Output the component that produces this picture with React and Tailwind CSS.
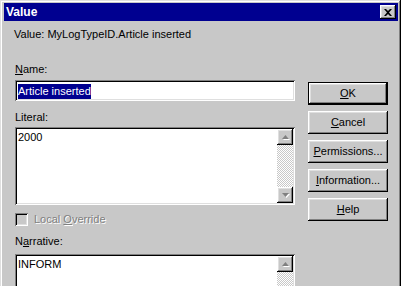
import React from "react";

const sunken =
    "shadow-[inset_1px_1px_#808080,inset_-1px_-1px_#fff,inset_2px_2px_#000,inset_-2px_-2px_#dfdfdf]";
const raised =
    "shadow-[inset_-1px_-1px_#000,inset_1px_1px_#fff,inset_-2px_-2px_#808080,inset_2px_2px_#dfdfdf]";

const Arrow = ({ down = false }) => (
    <div className={`w-[16px] h-[16px] bg-[#c8c8c8] flex items-center justify-center ${raised}`}>
        <svg width="9" height="6" viewBox="0 0 9 6">
            {down ? (
                <>
                    <polygon points="1,1 8,1 4.5,5" fill="#fff" transform="translate(1,1)" />
                    <polygon points="1,1 8,1 4.5,5" fill="#808080" />
                </>
            ) : (
                <>
                    <polygon points="4.5,1 8,5 1,5" fill="#fff" transform="translate(1,1)" />
                    <polygon points="4.5,1 8,5 1,5" fill="#808080" />
                </>
            )}
        </svg>
    </div>
);

const ScrollBar = () => (
    <div className="flex flex-col w-[16px] h-full">
        <Arrow />
        <div className="flex-1 bg-[repeating-conic-gradient(#fff_0_25%,#c8c8c8_0_50%)] bg-[length:2px_2px]" />
        <Arrow down />
    </div>
);

const TextBox = ({ text, height }) => (
    <div className={`bg-white p-[2px] ${sunken} ${height}`}>
        <div className="flex h-full">
            <div className="flex-1 pl-[1px] pt-[1px] leading-[14px]">{text}</div>
            <ScrollBar />
        </div>
    </div>
);

const Button = ({ label, accel, rest, isDefault = false }) => (
    <button
        className={`w-[80px] h-[23px] bg-[#c8c8c8] flex items-center justify-center text-black ${
            isDefault ? "border border-black" : ""
        } ${raised}`}
    >
        <span>
            {label}
            <span className="underline underline-offset-[1px]">{accel}</span>
            {rest}
        </span>
    </button>
);

export default function App() {
    return (
        <div className="w-[402px] h-[286px] overflow-hidden bg-white font-['Liberation_Sans',Arial,sans-serif] text-[11px] text-black">
            <div
                className={`w-[401px] h-[310px] bg-[#c8c8c8] pt-[3px] pl-[4px] pr-[3px] ${"shadow-[inset_-1px_-1px_#000,inset_1px_1px_#dfdfdf,inset_-2px_-2px_#808080,inset_2px_2px_#fff]"}`}
            >
                {/* Title bar */}
                <div className="h-[18px] bg-[#000090] flex items-center justify-between pl-[2px] pr-[2px]">
                    <span className="text-white font-bold text-[12px] leading-none">Value</span>
                    <div className={`w-[16px] h-[14px] bg-[#c8c8c8] flex items-center justify-center ${raised}`}>
                        <svg width="8" height="7" viewBox="0 0 8 7">
                            <path d="M0 0h2l2 2 2-2h2L5 3.5 8 7H6L4 5 2 7H0l3-3.5z" fill="#000" />
                        </svg>
                    </div>
                </div>

                <div className="flex">
                    {/* Left column */}
                    <div className="ml-[10px] w-[281px] flex flex-col">
                        <div className="mt-[6px] h-[14px] leading-[14px]">
                            Value: MyLogTypeID.Article inserted
                        </div>
                        <div className="mt-[21px] h-[14px] leading-[14px] pl-[1px]">
                            <span className="underline underline-offset-[1px]">N</span>ame:
                        </div>
                        <div className={`mt-[4px] ml-[1px] h-[21px] bg-white p-[2px] ${sunken}`}>
                            <div className="pl-[1px] pt-[1px]">
                                <span className="bg-[#000090] text-white leading-[15px] inline-block">
                                    Article inserted
                                </span>
                            </div>
                        </div>
                        <div className="mt-[9px] h-[14px] leading-[14px] pl-[1px]">Literal:</div>
                        <div className="mt-[3px] ml-[1px]">
                            <TextBox text="2000" height="h-[78px]" />
                        </div>
                        <div className="mt-[8px] ml-[1px] h-[13px] flex items-center gap-[6px]">
                            <div className={`w-[13px] h-[13px] bg-[#c8c8c8] ${sunken}`} />
                            <span className="text-[#808080] [text-shadow:1px_1px_0_#fff]">
                                Local <span className="underline underline-offset-[1px]">O</span>verride
                            </span>
                        </div>
                        <div className="mt-[8px] h-[14px] leading-[14px] pl-[1px]">
                            N<span className="underline underline-offset-[1px]">a</span>rrative:
                        </div>
                        <div className="mt-[6px] ml-[1px]">
                            <TextBox text="INFORM" height="h-[80px]" />
                        </div>
                    </div>

                    {/* Buttons */}
                    <div className="ml-[13px] mt-[61px] flex flex-col gap-[6px]">
                        <Button accel="O" rest="K" isDefault />
                        <Button accel="C" rest="ancel" />
                        <Button accel="P" rest="ermissions..." />
                        <Button accel="I" rest="nformation..." />
                        <Button accel="H" rest="elp" />
                    </div>
                </div>
            </div>
        </div>
    );
}
